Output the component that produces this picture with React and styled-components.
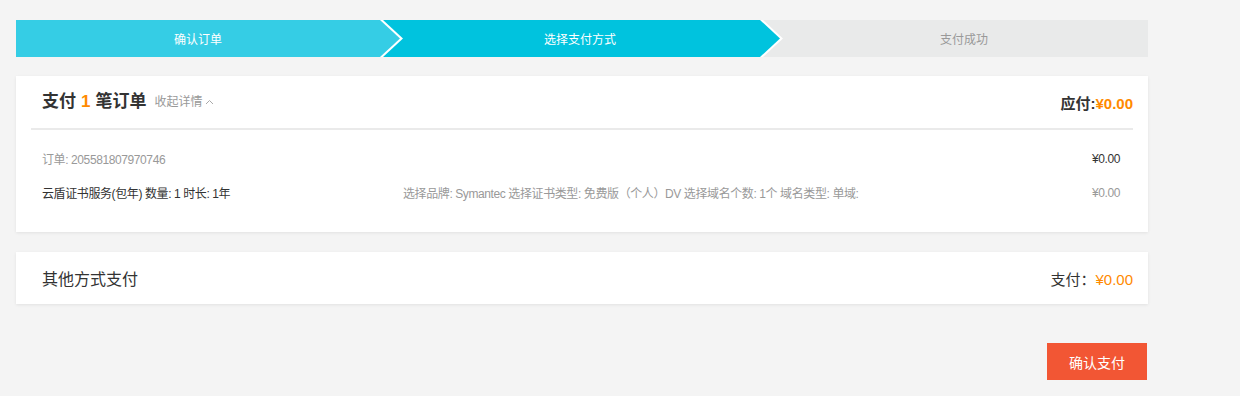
import React from "react";
import styled, { createGlobalStyle, css } from "styled-components";

const GlobalStyle = createGlobalStyle`
  html, body {
    margin: 0;
    padding: 0;
    background: #f4f4f4;
    font-family: "Liberation Sans", Arial, "Noto Sans CJK SC", sans-serif;
    color: #333;
  }
`;

const Page = styled.div`
  width: 1132px;
  padding: 20px 0 0 16px;
  display: flex;
  flex-direction: column;
`;

// PASOS ARRIBA

const Steps = styled.div`
  display: flex;
  height: 37px;
`;

const Step = styled.div`
  position: relative;
  height: 37px;
  display: flex;
  align-items: center;
  justify-content: center;
  font-size: 12px;
  background: ${(p) => p.$bg};
  color: ${(p) => (p.$done ? "#fff" : "#999")};
  z-index: ${(p) => p.$z};
  padding-left: ${(p) => (p.$first ? 0 : 20)}px;
  box-sizing: border-box;
  ${(p) => (p.$w ? `flex: 0 0 ${p.$w}px;` : "flex: 1;")}

  ${(p) =>
    p.$arrow &&
    css`
      &::before {
        content: "";
        position: absolute;
        top: 0;
        bottom: 0;
        right: -23px;
        width: 23px;
        background: #fff;
        clip-path: polygon(0 0, 3px 0, 23px 50%, 3px 100%, 0 100%);
      }
      &::after {
        content: "";
        position: absolute;
        top: 0;
        bottom: 0;
        right: -20px;
        width: 20px;
        background: ${p.$bg};
        clip-path: polygon(0 0, 20px 50%, 0 100%);
      }
    `}
`;

// TARJETAS

const Card = styled.div`
  background: #fff;
  box-shadow: 0 1px 3px rgba(0, 0, 0, 0.08);
  margin-top: ${(p) => p.$top}px;
`;

const Header = styled.div`
  margin: 0 15px;
  height: 52px;
  padding-left: 11px;
  display: flex;
  align-items: center;
  justify-content: space-between;
  border-bottom: 2px solid #eaeaea;
`;

const Title = styled.div`
  display: flex;
  align-items: center;
  font-size: 17px;
  font-weight: bold;
  line-height: 20px;
`;

const Num = styled.span`
  color: #ff8a00;
  margin: 0 5px;
`;

const Toggle = styled.span`
  display: inline-flex;
  align-items: center;
  gap: 3px;
  margin-left: 8px;
  font-size: 12px;
  font-weight: normal;
  color: #999;
`;

const Due = styled.div`
  font-size: 15px;
  font-weight: bold;
  color: #333;
`;

const Money = styled.span`
  color: #ff8a00;
`;

const Body = styled.div`
  padding: 20px 28px 32px 26px;
  display: flex;
  flex-direction: column;
  gap: 18px;
`;

const Row = styled.div`
  display: grid;
  grid-template-columns: 361px 1fr auto;
  align-items: center;
  height: 16px;
  font-size: 12px;
  letter-spacing: -0.4px;
  color: ${(p) => p.$color};
`;

const Cell = styled.div`
  color: ${(p) => p.$color || "inherit"};
  white-space: nowrap;
`;

const OtherCard = styled(Card)`
  height: 52px;
  padding: 0 15px 0 26px;
  display: flex;
  align-items: center;
  justify-content: space-between;
`;

const OtherTitle = styled.div`
  font-size: 16px;
  color: #333;
`;

const Pay = styled.div`
  font-size: 15px;
  color: #333;
`;

const Actions = styled.div`
  display: flex;
  justify-content: flex-end;
  padding-right: 1px;
  margin-top: 39px;
`;

const PayBtn = styled.button`
  width: 100px;
  height: 37px;
  border: none;
  background: #f25634;
  color: #fff;
  font-size: 14px;
  font-family: inherit;
  cursor: pointer;
`;

const Chevron = () => (
  <svg width="9" height="6" viewBox="0 0 9 6" fill="none">
    <path d="M1 5 L4.5 1.5 L8 5" stroke="#aaa" strokeWidth="1" />
  </svg>
);

const App = () => {
  return (
    <Page>
      <GlobalStyle />
      <Steps>
        <Step $bg="#35cde5" $done $first $arrow $z={3} $w={364}>
          确认订单
        </Step>
        <Step $bg="#00c3de" $done $arrow $z={2} $w={380}>
          选择支付方式
        </Step>
        <Step $bg="#e9eaea" $z={1}>
          支付成功
        </Step>
      </Steps>

      <Card $top={19}>
        <Header>
          <Title>
            支付<Num>1</Num>笔订单
            <Toggle>
              收起详情 <Chevron />
            </Toggle>
          </Title>
          <Due>
            应付:<Money>¥0.00</Money>
          </Due>
        </Header>
        <Body>
          <Row $color="#999">
            <Cell>订单: 205581807970746</Cell>
            <Cell />
            <Cell $color="#333">¥0.00</Cell>
          </Row>
          <Row $color="#999">
            <Cell $color="#333">云盾证书服务(包年) 数量: 1 时长: 1年</Cell>
            <Cell>选择品牌: Symantec 选择证书类型: 免费版（个人）DV 选择域名个数: 1个 域名类型: 单域:</Cell>
            <Cell>¥0.00</Cell>
          </Row>
        </Body>
      </Card>

      <OtherCard $top={20}>
        <OtherTitle>其他方式支付</OtherTitle>
        <Pay>
          支付：<Money>¥0.00</Money>
        </Pay>
      </OtherCard>

      <Actions>
        <PayBtn>确认支付</PayBtn>
      </Actions>
    </Page>
  );
};

export default App;
